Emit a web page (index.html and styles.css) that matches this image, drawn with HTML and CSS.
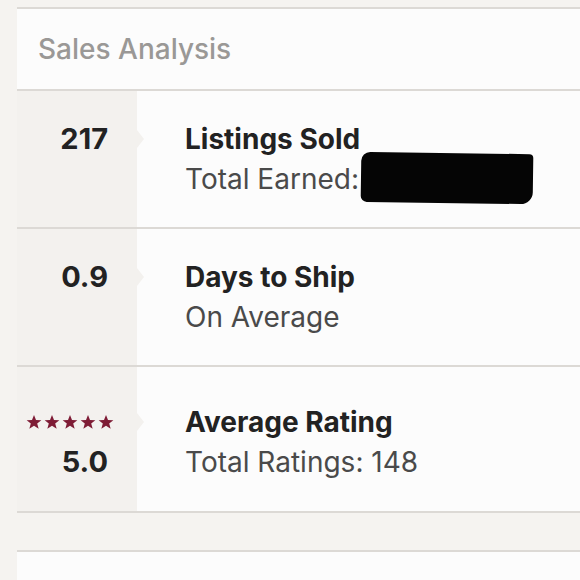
FILE: index.html
```html
<!DOCTYPE html>
<html>
<head>
<meta charset="utf-8">
<link rel="stylesheet" href="styles.css">
</head>
<body>
<div class="page">
  <section class="card">
    <header class="card-header">Sales Analysis</header>
    <div class="row">
      <div class="stat"><span class="num">217</span></div>
      <div class="info">
        <div class="title">Listings Sold</div>
        <div class="sub">Total Earned:<span class="redact"></span></div>
      </div>
    </div>
    <div class="row">
      <div class="stat"><span class="num">0.9</span></div>
      <div class="info">
        <div class="title">Days to Ship</div>
        <div class="sub">On Average</div>
      </div>
    </div>
    <div class="row row-rating">
      <div class="stat">
        <div class="stars">
          <svg viewBox="0 0 24 24"><polygon points="12,1.5 15,9 23,9.3 16.8,14.3 19,22.2 12,17.6 5,22.2 7.2,14.3 1,9.3 9,9"/></svg>
          <svg viewBox="0 0 24 24"><polygon points="12,1.5 15,9 23,9.3 16.8,14.3 19,22.2 12,17.6 5,22.2 7.2,14.3 1,9.3 9,9"/></svg>
          <svg viewBox="0 0 24 24"><polygon points="12,1.5 15,9 23,9.3 16.8,14.3 19,22.2 12,17.6 5,22.2 7.2,14.3 1,9.3 9,9"/></svg>
          <svg viewBox="0 0 24 24"><polygon points="12,1.5 15,9 23,9.3 16.8,14.3 19,22.2 12,17.6 5,22.2 7.2,14.3 1,9.3 9,9"/></svg>
          <svg viewBox="0 0 24 24"><polygon points="12,1.5 15,9 23,9.3 16.8,14.3 19,22.2 12,17.6 5,22.2 7.2,14.3 1,9.3 9,9"/></svg>
        </div>
        <span class="num">5.0</span>
      </div>
      <div class="info">
        <div class="title">Average Rating</div>
        <div class="sub">Total Ratings: 148</div>
      </div>
    </div>
  </section>
  <div class="gap"></div>
  <section class="card card-next"></section>
</div>
</body>
</html>
```

FILE: styles.css
```css
html, body {
  margin: 0;
  padding: 0;
  background: #f5f3f0;
  font-family: "Inter", "Liberation Sans", sans-serif;
}

.page {
  padding: 7px 0 0 17px;
}

.card {
  background: #fcfcfc;
  border-top: 2px solid #dcd9d5;
  border-bottom: 2px solid #dcd9d5;
}

.card-header {
  height: 80px;
  box-sizing: border-box;
  padding: 20px 0 0 21px;
  font-size: 28px;
  font-weight: 500;
  line-height: 40px;
  color: #9a9896;
}

.row {
  display: flex;
  height: 136px;
  border-top: 2px solid #dcd9d5;
}

.row-rating {
  height: 144px;
}

.stat {
  width: 120px;
  flex-shrink: 0;
  background: #f3f1ee;
  box-sizing: border-box;
  padding: 28px 29px 0 0;
  display: flex;
  flex-direction: column;
  align-items: flex-end;
}

.row-rating .stat {
  padding-top: 35px;
}

.num {
  font-size: 29px;
  font-weight: 700;
  line-height: 40px;
  color: #222;
}

.stars {
  display: flex;
  gap: 2px;
  margin-right: -6px;
  height: 40px;
  align-items: center;
}

.stars svg {
  width: 16px;
  height: 16px;
  fill: #7e1c35;
}

.info {
  padding: 28px 0 0 48px;
}

.row-rating .info {
  padding-top: 35px;
}

.title {
  position: relative;
  font-size: 28px;
  font-weight: 700;
  line-height: 40px;
  color: #222;
}

.title::before {
  content: "";
  position: absolute;
  left: -48px;
  top: 11px;
  border-top: 9px solid transparent;
  border-bottom: 9px solid transparent;
  border-left: 7px solid #f3f1ee;
}

.sub {
  font-size: 28px;
  font-weight: 400;
  line-height: 40px;
  color: #4a4a4a;
  white-space: nowrap;
}

.redact {
  display: inline-block;
  width: 172px;
  height: 50px;
  margin: -13px 0 -13px 2px;
  vertical-align: -1px;
  background: #050505;
  border-radius: 9px 4px 12px 6px;
  transform: rotate(0.8deg);
}

.gap {
  height: 37px;
}

.card-next {
  height: 40px;
  border-bottom: none;
}
```
